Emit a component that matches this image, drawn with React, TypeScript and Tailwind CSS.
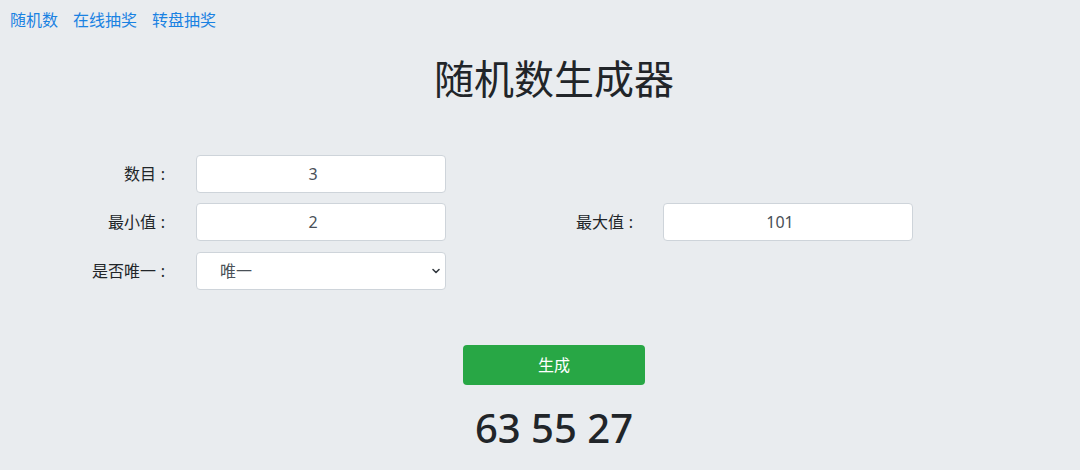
import React from "react";

const font = { fontFamily: '"Noto Sans", "Noto Sans CJK SC", sans-serif' };

function Label({ text, w }: { text: string; w: string }) {
  return (
    <div className={`${w} shrink-0 text-right text-[16px] text-[#212529] leading-[38px]`}>
      {text}
      <span className="inline-block w-[14px] text-center">:</span>
    </div>
  );
}

function Field({ value }: { value: string }) {
  return (
    <input
      readOnly
      value={value}
      className="w-[250px] h-[38px] shrink-0 rounded-[4px] border border-[#ced4da] bg-white pr-[16px] text-center text-[16px] text-[#495057] outline-none"
    />
  );
}

export default function App() {
  return (
    <div className="min-h-[470px] w-full bg-[#e9ecef] text-[#212529]" style={font}>
      <nav className="flex gap-[15px] pl-[10px] pt-[8px] text-[16px] leading-[24px] text-[#1a82e2]">
        <a>随机数</a>
        <a>在线抽奖</a>
        <a>转盘抽奖</a>
      </nav>
      <h1 className="mt-[22px] ml-[28px] text-center text-[40px] leading-[50px] font-normal text-[#212529]">随机数生成器</h1>
      <div className="mt-[51px] flex flex-col gap-[10px]">
        <div className="flex items-center">
          <Label w="w-[170px]" text="数目" />
          <div className="w-[26px] shrink-0" />
          <Field value="3" />
        </div>
        <div className="flex items-center">
          <Label w="w-[170px]" text="最小值" />
          <div className="w-[26px] shrink-0" />
          <Field value="2" />
          <Label w="w-[192px]" text="最大值" />
          <div className="w-[25px] shrink-0" />
          <Field value="101" />
        </div>
        <div className="flex items-center mt-[1px]">
          <Label w="w-[170px]" text="是否唯一" />
          <div className="w-[26px] shrink-0" />
          <div className="relative w-[250px] h-[38px] shrink-0 rounded-[4px] border border-[#ced4da] bg-white">
            <span className="absolute left-[23px] top-0 text-[16px] leading-[36px] text-[#495057]">唯一</span>
            <svg className="absolute right-[4px] top-[14px]" width="10" height="8" viewBox="0 0 10 8">
              <path d="M2 2.5 L5 5.5 L8 2.5" fill="none" stroke="#343a40" strokeWidth="1.6" strokeLinecap="round" strokeLinejoin="round" />
            </svg>
          </div>
        </div>
      </div>
      <div className="mt-[55px] flex justify-center">
        <button className="ml-[28px] w-[182px] h-[40px] rounded-[4px] bg-[#28a745] text-[16px] text-white">生成</button>
      </div>
      <div className="mt-[16px] ml-[28px] text-center text-[40px] leading-[54px] font-medium text-[#212529]">63 55 27</div>
    </div>
  );
}
